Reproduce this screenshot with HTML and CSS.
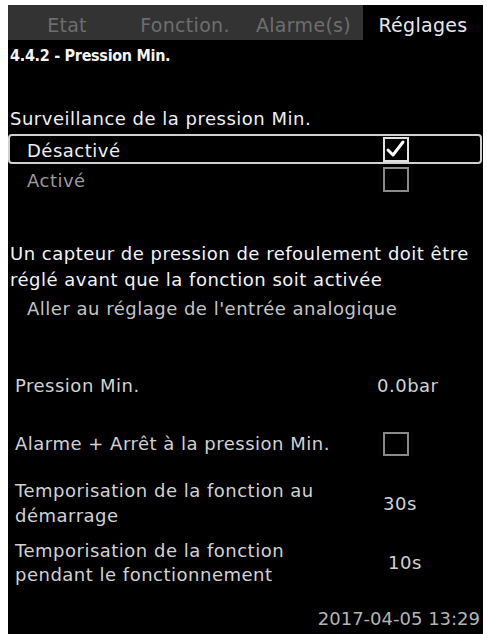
FILE: index.html
```html
<!DOCTYPE html>
<html lang="fr">
<head>
<meta charset="utf-8">
<title>4.4.2 - Pression Min.</title>
<link rel="stylesheet" href="styles.css">
</head>
<body>
<div class="screen">
  <div class="tabs">
    <div class="tab">Etat</div>
    <div class="tab">Fonction.</div>
    <div class="tab tab-3">Alarme(s)</div>
    <div class="tab active">Réglages</div>
  </div>
  <div class="title">4.4.2 - Pression Min.</div>
  <div class="heading">Surveillance de la pression Min.</div>
  <div class="options">
    <div class="option selected">
      <span class="opt-label">Désactivé</span>
      <span class="checkbox checked">
        <svg viewBox="0 0 22 21" width="22" height="21"><polyline points="3,11 8,16 18,3" fill="none" stroke="#ffffff" stroke-width="3" stroke-linecap="round" stroke-linejoin="round"/></svg>
      </span>
    </div>
    <div class="option dim">
      <span class="opt-label">Activé</span>
      <span class="checkbox"></span>
    </div>
  </div>
  <div class="warning">Un capteur de pression de refoulement doit être<br>réglé avant que la fonction soit activée</div>
  <div class="link">Aller au réglage de l'entrée analogique</div>
  <div class="param p-min">
    <span class="p-label">Pression Min.</span>
    <span class="p-value">0.0bar</span>
  </div>
  <div class="param p-alarm">
    <span class="p-label">Alarme + Arrêt à la pression Min.</span>
    <span class="p-value"><span class="checkbox box-alarm"></span></span>
  </div>
  <div class="param p-delay1">
    <span class="p-label">Temporisation de la fonction au<br>démarrage</span>
    <span class="p-value v-30">30s</span>
  </div>
  <div class="param p-delay2">
    <span class="p-label">Temporisation de la fonction<br>pendant le fonctionnement</span>
    <span class="p-value v-10">10s</span>
  </div>
  <div class="datetime">2017-04-05 13:29</div>
</div>
</body>
</html>
```

FILE: styles.css
```css
html, body {
  margin: 0;
  padding: 0;
  background: #ffffff;
}

body {
  font-family: "DejaVu Sans", "Noto Sans", sans-serif;
  font-size: 18px;
  letter-spacing: 0.5px;
  color: #f0f0f0;
}

.screen {
  margin: 5px 4px 0 8px;
  width: 475px;
  height: 629px;
  background: #000000;
  display: flex;
  flex-direction: column;
  overflow: hidden;
}

.tabs {
  display: flex;
  height: 35px;
  background: #333333;
}

.tab {
  width: 118px;
  display: flex;
  align-items: center;
  justify-content: center;
  padding-top: 4px;
  box-sizing: border-box;
  font-size: 19px;
  letter-spacing: 0.3px;
  color: #6e6e6e;
}

.tab-3 {
  width: 119px;
}

.tab.active {
  width: 120px;
  background: #000000;
  color: #e8e8e8;
}

.title {
  margin-top: 5px;
  padding-left: 2px;
  line-height: 22px;
  font-family: "DejaVu Sans Condensed", "DejaVu Sans", sans-serif;
  font-weight: bold;
  font-size: 16px;
  letter-spacing: -0.3px;
  color: #f4f4f4;
}

.heading {
  margin-top: 39px;
  padding-left: 2px;
  line-height: 26px;
}

.options {
  margin-top: 2px;
  display: flex;
  flex-direction: column;
}

.option {
  height: 30px;
  box-sizing: border-box;
  width: 474px;
  border: 2px solid transparent;
  border-radius: 4px;
  display: grid;
  grid-template-columns: 1fr 26px 71px;
  align-items: center;
  padding-left: 17px;
}

.option.selected {
  border-color: #d0d0d0;
}

.option.dim {
  color: #9a9a9a;
}

.opt-label {
  padding-top: 3px;
}

.checkbox {
  display: flex;
  align-items: center;
  justify-content: center;
  width: 26px;
  height: 25px;
  box-sizing: border-box;
  border: 2px solid #8a8a8a;
}

.checkbox.checked {
  border-color: #e0e0e0;
}

.checkbox svg {
  display: block;
}

.warning {
  margin-top: 47px;
  padding-left: 2px;
  line-height: 26px;
  color: #f4f4f4;
}

.link {
  margin-top: 3px;
  padding-left: 19px;
  line-height: 26px;
  color: #c4c4c4;
}

.param {
  display: grid;
  grid-template-columns: 362px 1fr;
  align-items: center;
  padding-left: 7px;
  color: #d2d2d2;
}

.p-min {
  margin-top: 51px;
  line-height: 26px;
}

.p-alarm {
  margin-top: 32px;
  line-height: 26px;
}

.box-alarm {
  margin-left: 6px;
  width: 26px;
  height: 24px;
}

.p-delay1 {
  margin-top: 21px;
  line-height: 25px;
}

.v-30 {
  padding-left: 6px;
}

.p-delay2 {
  margin-top: 11px;
  line-height: 24px;
}

.v-10 {
  padding-left: 11px;
}

.datetime {
  margin-top: 20px;
  line-height: 24px;
  text-align: right;
  padding-right: 3px;
  letter-spacing: 0;
  color: #b4b4b4;
}
```
